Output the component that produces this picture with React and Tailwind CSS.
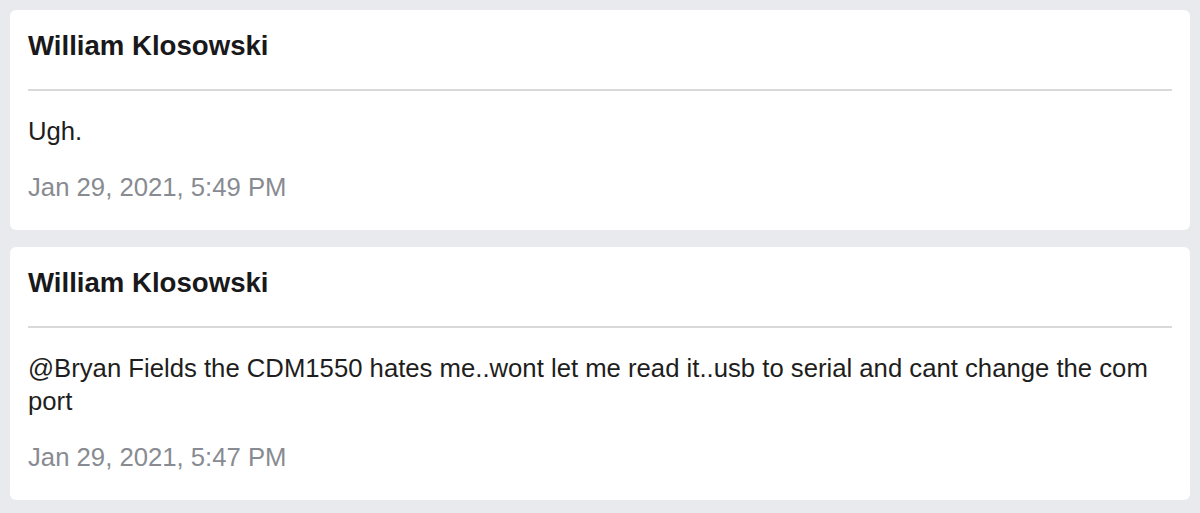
import React from "react";

const messages = [
  {
    id: 1,
    author: "William Klosowski",
    text: "Ugh.",
    time: "Jan 29, 2021, 5:49 PM",
  },
  {
    id: 2,
    author: "William Klosowski",
    text: "@Bryan Fields the CDM1550 hates me..wont let me read it..usb to serial and cant change the com port",
    time: "Jan 29, 2021, 5:47 PM",
  },
];

function MessageCard({ m }) {
  return (
    <div className="bg-white rounded-[6px] px-[18px] pb-[26px]">
      <div className="pt-[20px] pb-[27px] border-b-2 border-[#d9d9d9]">
        <h3 className="text-[27.6px] leading-[32px] font-bold text-[#19191b]">{m.author}</h3>
      </div>
      <p className="pt-[24px] text-[25.7px] leading-[33px] text-[#1e1e20]">{m.text}</p>
      <p className="mt-[23px] text-[25.7px] leading-[33px] text-[#888b91]">{m.time}</p>
    </div>
  );
}

export default function App() {
  return (
    <div
      className="min-h-[513px] bg-[#e9eaee] pt-[10px] pb-[13px] pl-[10px] pr-[10px]"
      style={{ fontFamily: '"Liberation Sans", Arial, sans-serif' }}
    >
      <div className="flex flex-col gap-[17px]">
        {messages.map((m) => (
          <MessageCard key={m.id} m={m} />
        ))}
      </div>
    </div>
  );
}
